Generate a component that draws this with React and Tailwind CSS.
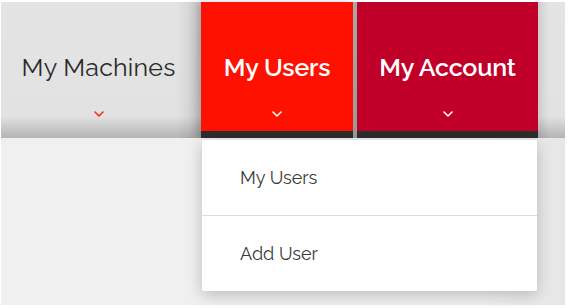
import React from "react";

function Chevron({ color }) {
  return (
    <svg width="10" height="6" viewBox="0 0 10 6" fill="none">
      <polyline points="1,1 5,5 9,1" stroke={color} strokeWidth="1.6" strokeLinecap="round" strokeLinejoin="round" />
    </svg>
  );
}

export default function App() {
  const font = { fontFamily: "Raleway, Lato, 'Open Sans', sans-serif" };
  return (
    <div className="w-[568px] h-[308px] bg-white pt-[2px] pl-[1px] pr-[3px] pb-[3px] overflow-hidden" style={font}>
      <div className="relative w-full h-full bg-[#f0f0f0] flex flex-col">
        <nav className="h-[136px] flex bg-[linear-gradient(to_bottom,#e4e4e4_0%,#e2e2e2_84%,#b4b4b4_100%)]">
          <div className="w-[200px] flex flex-col items-center pt-[48px] pr-[5px] bg-[linear-gradient(to_right,transparent_88%,rgba(0,0,0,0.12)_100%)]">
            <span className="text-[25px] leading-[34px] text-[#2b2b2b] tracking-[0.2px]">My Machines</span>
            <div className="mt-[27px]"><Chevron color="#ff2a1a" /></div>
          </div>
          <div className="w-[152px] flex flex-col bg-[#fe1100] shadow-[-4px_0_8px_rgba(0,0,0,0.18)]">
            <div className="flex-1 flex flex-col items-center pt-[48px]">
              <span className="text-[25px] leading-[34px] text-white font-semibold tracking-[-0.2px]">My Users</span>
              <div className="mt-[27px]"><Chevron color="#ffffff" /></div>
            </div>
            <div className="h-[7px] bg-[#2d2d2d]" />
          </div>
          <div className="w-[4px] bg-[linear-gradient(to_bottom,#a8a8a8,#9a9a9a)]" />
          <div className="w-[181px] flex flex-col bg-[#c1002a]">
            <div className="flex-1 flex flex-col items-center pt-[48px]">
              <span className="text-[25px] leading-[34px] text-white font-semibold tracking-[-0.2px]">My Account</span>
              <div className="mt-[27px]"><Chevron color="#ffffff" /></div>
            </div>
            <div className="h-[7px] bg-[#2d2d2d]" />
          </div>
          <div className="flex-1 bg-[linear-gradient(to_right,rgba(0,0,0,0.1)_0%,transparent_40%)]" />
        </nav>
        <div className="flex-1 bg-[linear-gradient(to_right,#f0f0f0_0%,#f0f0f0_85%,#e6e6e6_100%)]" />
        <div className="absolute left-[201px] top-[138px] w-[335px] h-[151px] bg-white rounded-[2px] shadow-[0_4px_16px_rgba(0,0,0,0.22)] flex flex-col">
          <div className="h-[76px] flex items-center pl-[38px] text-[18px] text-[#3a3a3a] border-b border-[#dcdcdc]">My Users</div>
          <div className="flex-1 flex items-center pl-[38px] text-[18px] text-[#3a3a3a]">Add User</div>
        </div>
      </div>
    </div>
  );
}
